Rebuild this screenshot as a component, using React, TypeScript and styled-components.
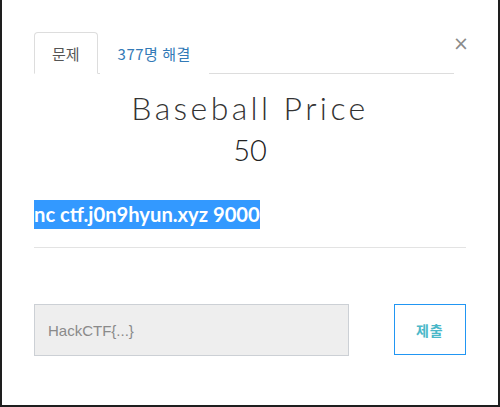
import React from "react";
import styled, { createGlobalStyle } from "styled-components";

const Global = createGlobalStyle`
  html, body { margin: 0; padding: 0; background: #1e1e1e; }
  body { font-family: "Liberation Sans", Arial, sans-serif; }
  * { box-sizing: border-box; }
`;

const Modal = styled.div`
  margin: 0 2px 0 2px;
  width: 496px;
  height: 405px;
  background: #fff;
  padding: 32px 32px 0 32px;
  display: flex;
  flex-direction: column;
`;

const TabBar = styled.div`
  display: flex;
  align-items: flex-end;
  border-bottom: 1px solid #ddd;
  margin-right: 12px;
  position: relative;
`;

const Tab = styled.div<{ $active?: boolean }>`
  height: 42px;
  padding: 0 17px;
  display: flex;
  align-items: center;
  font-family: "Noto Sans CJK KR", "Liberation Sans", sans-serif;
  font-size: 15px;
  letter-spacing: ${(p) => (p.$active ? "0" : "0.5px")};
  margin-bottom: -1px;
  border: 1px solid ${(p) => (p.$active ? "#ddd" : "transparent")};
  border-bottom-color: ${(p) => (p.$active ? "#fff" : "transparent")};
  border-radius: 4px 4px 0 0;
  background: #fff;
  color: ${(p) => (p.$active ? "#555" : "#337ab7")};
  margin-right: 2px;
`;

const Close = styled.div`
  position: absolute;
  right: -15px;
  top: 2px;
  font-family: "DejaVu Sans", sans-serif;
  font-size: 19px;
  font-weight: normal;
  color: #8a8a8a;
  line-height: 1;
`;

const Title = styled.h1`
  margin: 16px 0 0 0;
  text-align: center;
  font-family: "Lato", sans-serif;
  font-weight: 300;
  font-size: 32px;
  letter-spacing: 3.4px;
  color: #333;
  line-height: 36px;
`;

const Points = styled.div`
  margin-top: 8px;
  text-align: center;
  font-family: "Lato", sans-serif;
  font-weight: 300;
  font-size: 29px;
  color: #222;
  line-height: 32px;
`;

const Desc = styled.div`
  margin-top: 34px;
  display: flex;
`;

const Selected = styled.span`
  display: inline-block;
  background: #3399ff;
  color: #fff;
  font-family: "Lato", sans-serif;
  font-weight: 700;
  font-size: 20.2px;
  line-height: 29px;
  height: 29px;
  padding-right: 0;
`;

const Divider = styled.hr`
  margin: 18px 0 0 0;
  border: 0;
  border-top: 1px solid #e3e3e3;
`;

const Form = styled.div`
  margin-top: 56px;
  display: flex;
  align-items: flex-start;
`;

const Input = styled.input`
  width: 318px;
  height: 52px;
  background: #eee;
  border: 1px solid #ccd0d5;
  padding: 0 13px;
  font-family: "Liberation Sans", Arial, sans-serif;
  font-size: 15px;
  color: #555;
  outline: none;
  &::placeholder { color: #8a8a8a; }
`;

const Submit = styled.button`
  margin-left: 45px;
  width: 73px;
  height: 51px;
  background: #fff;
  border: 1px solid #2196f3;
  color: #4ab8c9;
  font-family: "Noto Sans CJK KR", sans-serif;
  font-size: 14px;
  font-weight: 700;
  letter-spacing: 1px;
`;

export default function App() {
  return (
    <>
      <Global />
      <Modal>
        <TabBar>
          <Tab $active>문제</Tab>
          <Tab>377명 해결</Tab>
          <Close>×</Close>
        </TabBar>
        <Title>Baseball Price</Title>
        <Points>50</Points>
        <Desc>
          <Selected>nc ctf.j0n9hyun.xyz 9000</Selected>
        </Desc>
        <Divider />
        <Form>
          <Input placeholder="HackCTF{...}" />
          <Submit>제출</Submit>
        </Form>
      </Modal>
    </>
  );
}
